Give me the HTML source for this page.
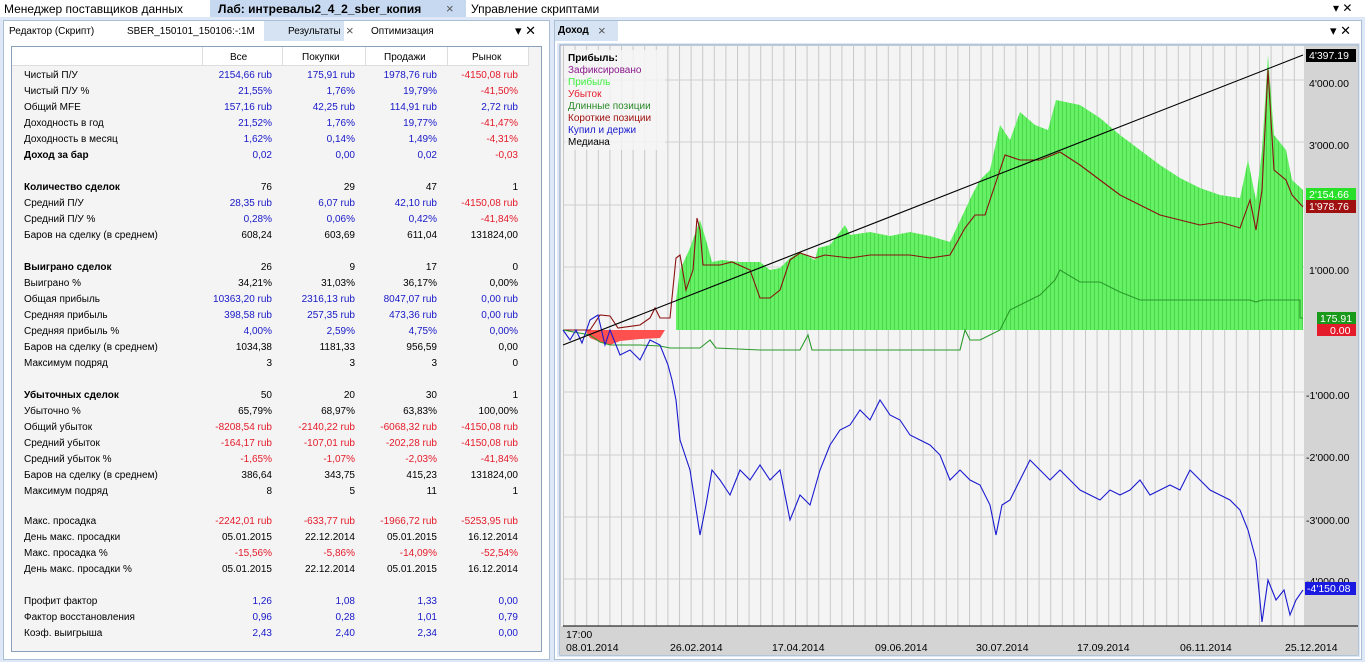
<!DOCTYPE html><html><head><meta charset="utf-8"><style>
*{margin:0;padding:0;box-sizing:border-box}
body{width:1365px;height:662px;background:#dfe8f6;font-family:"Liberation Sans",sans-serif;font-size:10px;color:#000;position:relative;overflow:hidden}
.a{position:absolute;white-space:nowrap}
.row{position:absolute;left:0;width:540px;height:16px;line-height:16px}
.row span{position:absolute}
.l{left:24px}.c1{right:268px}.c2{right:185px}.c3{right:103px}.c4{right:22px}
.b{color:#1818c8}.r{color:#e41b2a}.bold{font-weight:bold}
</style></head><body>
<div class="a" style="left:0;top:0;width:1365px;height:17px;background:#fff"></div>
<div class="a" style="left:4px;top:2px;font-size:12px">Менеджер поставщиков данных</div>
<div class="a" style="left:210px;top:0;width:256px;height:17px;background:#c7d9f0"></div>
<div class="a" style="left:218px;top:2px;font-size:12px;font-weight:bold">Лаб: интревалы2_4_2_sber_копия</div>
<div class="a" style="left:446px;top:1px;font-size:13px;color:#555">×</div>
<div class="a" style="left:471px;top:2px;font-size:12px">Управление скриптами</div>
<div class="a" style="left:1333px;top:1px;font-size:12px">▾ ✕</div>

<div class="a" style="left:3px;top:20px;width:547px;height:640px;background:#fff;border:1px solid #a9bfd6"></div>
<div class="a" style="left:9px;top:26px">Редактор (Скрипт)</div>
<div class="a" style="left:127px;top:26px">SBER_150101_150106:-:1M</div>
<div class="a" style="left:264px;top:21px;width:80px;height:20px;background:#d6e3f3"></div>
<div class="a" style="left:288px;top:26px">Результаты</div>
<div class="a" style="left:346px;top:23px;font-size:13px;color:#555">×</div>
<div class="a" style="left:371px;top:26px">Оптимизация</div>
<div class="a" style="left:515px;top:23px;font-size:13px">▾ ✕</div>
<div class="a" style="left:11px;top:46px;width:531px;height:606px;background:#f4f4f4;border:1px solid #8aa0b8"></div>
<div class="a" style="left:12px;top:47px;width:517px;height:19px;background:#fff;border-bottom:1px solid #ddd"></div>
<div class="a" style="left:202px;top:47px;width:1px;height:19px;background:#ddd"></div>
<div class="a" style="left:282px;top:47px;width:1px;height:19px;background:#ddd"></div>
<div class="a" style="left:365px;top:47px;width:1px;height:19px;background:#ddd"></div>
<div class="a" style="left:447px;top:47px;width:1px;height:19px;background:#ddd"></div>
<div class="a" style="left:528px;top:47px;width:1px;height:19px;background:#ddd"></div>
<div class="a" style="left:230px;top:52px">Все</div>
<div class="a" style="left:302px;top:52px">Покупки</div>
<div class="a" style="left:384px;top:52px">Продажи</div>
<div class="a" style="left:472px;top:52px">Рынок</div>
<div class="a" style="left:0;top:0">
<div class="row" style="top:68px"><span class="l">Чистый П/У</span><span class="c1 b">2154,66 rub</span><span class="c2 b">175,91 rub</span><span class="c3 b">1978,76 rub</span><span class="c4 r">-4150,08 rub</span></div>
<div class="row" style="top:84px"><span class="l">Чистый П/У %</span><span class="c1 b">21,55%</span><span class="c2 b">1,76%</span><span class="c3 b">19,79%</span><span class="c4 r">-41,50%</span></div>
<div class="row" style="top:100px"><span class="l">Общий MFE</span><span class="c1 b">157,16 rub</span><span class="c2 b">42,25 rub</span><span class="c3 b">114,91 rub</span><span class="c4 b">2,72 rub</span></div>
<div class="row" style="top:116px"><span class="l">Доходность в год</span><span class="c1 b">21,52%</span><span class="c2 b">1,76%</span><span class="c3 b">19,77%</span><span class="c4 r">-41,47%</span></div>
<div class="row" style="top:132px"><span class="l">Доходность в месяц</span><span class="c1 b">1,62%</span><span class="c2 b">0,14%</span><span class="c3 b">1,49%</span><span class="c4 r">-4,31%</span></div>
<div class="row" style="top:148px"><span class="l bold">Доход за бар</span><span class="c1 b">0,02</span><span class="c2 b">0,00</span><span class="c3 b">0,02</span><span class="c4 r">-0,03</span></div>
<div class="row" style="top:180px"><span class="l bold">Количество сделок</span><span class="c1">76</span><span class="c2">29</span><span class="c3">47</span><span class="c4">1</span></div>
<div class="row" style="top:196px"><span class="l">Средний П/У</span><span class="c1 b">28,35 rub</span><span class="c2 b">6,07 rub</span><span class="c3 b">42,10 rub</span><span class="c4 r">-4150,08 rub</span></div>
<div class="row" style="top:212px"><span class="l">Средний П/У %</span><span class="c1 b">0,28%</span><span class="c2 b">0,06%</span><span class="c3 b">0,42%</span><span class="c4 r">-41,84%</span></div>
<div class="row" style="top:228px"><span class="l">Баров на сделку (в среднем)</span><span class="c1">608,24</span><span class="c2">603,69</span><span class="c3">611,04</span><span class="c4">131824,00</span></div>
<div class="row" style="top:260px"><span class="l bold">Выиграно сделок</span><span class="c1">26</span><span class="c2">9</span><span class="c3">17</span><span class="c4">0</span></div>
<div class="row" style="top:276px"><span class="l">Выиграно %</span><span class="c1">34,21%</span><span class="c2">31,03%</span><span class="c3">36,17%</span><span class="c4">0,00%</span></div>
<div class="row" style="top:292px"><span class="l">Общая прибыль</span><span class="c1 b">10363,20 rub</span><span class="c2 b">2316,13 rub</span><span class="c3 b">8047,07 rub</span><span class="c4 b">0,00 rub</span></div>
<div class="row" style="top:308px"><span class="l">Средняя прибыль</span><span class="c1 b">398,58 rub</span><span class="c2 b">257,35 rub</span><span class="c3 b">473,36 rub</span><span class="c4 b">0,00 rub</span></div>
<div class="row" style="top:324px"><span class="l">Средняя прибыль %</span><span class="c1 b">4,00%</span><span class="c2 b">2,59%</span><span class="c3 b">4,75%</span><span class="c4 b">0,00%</span></div>
<div class="row" style="top:340px"><span class="l">Баров на сделку (в среднем)</span><span class="c1">1034,38</span><span class="c2">1181,33</span><span class="c3">956,59</span><span class="c4">0,00</span></div>
<div class="row" style="top:356px"><span class="l">Максимум подряд</span><span class="c1">3</span><span class="c2">3</span><span class="c3">3</span><span class="c4">0</span></div>
<div class="row" style="top:388px"><span class="l bold">Убыточных сделок</span><span class="c1">50</span><span class="c2">20</span><span class="c3">30</span><span class="c4">1</span></div>
<div class="row" style="top:404px"><span class="l">Убыточно %</span><span class="c1">65,79%</span><span class="c2">68,97%</span><span class="c3">63,83%</span><span class="c4">100,00%</span></div>
<div class="row" style="top:420px"><span class="l">Общий убыток</span><span class="c1 r">-8208,54 rub</span><span class="c2 r">-2140,22 rub</span><span class="c3 r">-6068,32 rub</span><span class="c4 r">-4150,08 rub</span></div>
<div class="row" style="top:436px"><span class="l">Средний убыток</span><span class="c1 r">-164,17 rub</span><span class="c2 r">-107,01 rub</span><span class="c3 r">-202,28 rub</span><span class="c4 r">-4150,08 rub</span></div>
<div class="row" style="top:452px"><span class="l">Средний убыток %</span><span class="c1 r">-1,65%</span><span class="c2 r">-1,07%</span><span class="c3 r">-2,03%</span><span class="c4 r">-41,84%</span></div>
<div class="row" style="top:468px"><span class="l">Баров на сделку (в среднем)</span><span class="c1">386,64</span><span class="c2">343,75</span><span class="c3">415,23</span><span class="c4">131824,00</span></div>
<div class="row" style="top:484px"><span class="l">Максимум подряд</span><span class="c1">8</span><span class="c2">5</span><span class="c3">11</span><span class="c4">1</span></div>
<div class="row" style="top:514px"><span class="l">Макс. просадка</span><span class="c1 r">-2242,01 rub</span><span class="c2 r">-633,77 rub</span><span class="c3 r">-1966,72 rub</span><span class="c4 r">-5253,95 rub</span></div>
<div class="row" style="top:530px"><span class="l">День макс. просадки</span><span class="c1">05.01.2015</span><span class="c2">22.12.2014</span><span class="c3">05.01.2015</span><span class="c4">16.12.2014</span></div>
<div class="row" style="top:546px"><span class="l">Макс. просадка %</span><span class="c1 r">-15,56%</span><span class="c2 r">-5,86%</span><span class="c3 r">-14,09%</span><span class="c4 r">-52,54%</span></div>
<div class="row" style="top:562px"><span class="l">День макс. просадки %</span><span class="c1">05.01.2015</span><span class="c2">22.12.2014</span><span class="c3">05.01.2015</span><span class="c4">16.12.2014</span></div>
<div class="row" style="top:594px"><span class="l">Профит фактор</span><span class="c1 b">1,26</span><span class="c2 b">1,08</span><span class="c3 b">1,33</span><span class="c4 b">0,00</span></div>
<div class="row" style="top:610px"><span class="l">Фактор восстановления</span><span class="c1 b">0,96</span><span class="c2 b">0,28</span><span class="c3 b">1,01</span><span class="c4 b">0,79</span></div>
<div class="row" style="top:626px"><span class="l">Коэф. выигрыша</span><span class="c1 b">2,43</span><span class="c2 b">2,40</span><span class="c3 b">2,34</span><span class="c4 b">0,00</span></div>
</div>

<div class="a" style="left:554px;top:20px;width:808px;height:640px;background:#fff;border:1px solid #a9bfd6"></div>
<div class="a" style="left:555px;top:21px;width:63px;height:20px;background:#d6e3f3"></div>
<div class="a" style="left:558px;top:25px;font-weight:bold">Доход</div>
<div class="a" style="left:598px;top:23px;font-size:13px;color:#555">×</div>
<div class="a" style="left:1330px;top:23px;font-size:13px">▾ ✕</div>
<svg class="a" style="left:557px;top:43px" width="803" height="614" viewBox="557 43 803 614">
<defs><pattern id="vg" x="563" y="0" width="11.6" height="700" patternUnits="userSpaceOnUse"><rect width="11.6" height="700" fill="#f4f4f4"/><rect x="0" width="1" height="700" fill="#c8c8c8"/></pattern>
<pattern id="gb" x="563" y="0" width="4" height="700" patternUnits="userSpaceOnUse"><rect width="4" height="700" fill="#66f066"/><rect x="3" width="1" height="700" fill="#48d848"/></pattern></defs>
<rect x="557" y="43" width="803" height="614" fill="#dfe8f6"/>
<rect x="560" y="45" width="798" height="610" fill="#f4f4f4" stroke="#8aa0b8"/>
<rect x="563" y="46" width="741" height="580" fill="url(#vg)"/>
<g stroke="#d0d0d0"><line x1="563" x2="1304" y1="80" y2="80"/><line x1="563" x2="1304" y1="142" y2="142"/><line x1="563" x2="1304" y1="205" y2="205"/><line x1="563" x2="1304" y1="267" y2="267"/><line x1="563" x2="1304" y1="392" y2="392"/><line x1="563" x2="1304" y1="455" y2="455"/><line x1="563" x2="1304" y1="517" y2="517"/><line x1="563" x2="1304" y1="579" y2="579"/></g>
<rect x="1304" y="46" width="54" height="580" fill="#d4d4d4"/>
<rect x="560" y="626" width="798" height="29" fill="#d4d4d4"/>
<line x1="563" x2="1358" y1="626" y2="626" stroke="#000"/>
<polygon points="585,330 590,338 600,342 610,345 620,341 640,339 660,338 665,330" fill="#ff5050"/>
<polygon points="676,330 676,300 680,270 690,248 700,220 706,240 712,262 722,260 740,262 760,262 770,270 780,268 790,258 800,252 815,260 818,248 830,245 845,225 850,235 870,232 890,236 910,232 930,236 950,242 965,210 972,195 980,180 990,170 1000,125 1010,140 1020,112 1035,125 1048,130 1056,100 1080,105 1100,118 1120,135 1140,150 1160,165 1180,178 1200,188 1220,195 1240,198 1248,160 1256,200 1262,150 1268,55 1274,135 1286,150 1292,180 1303,190 1303,330" fill="url(#gb)"/>
<polyline fill="none" stroke="#8b1010" stroke-width="1.1" points="563,330 590,330 600,315 610,316 618,328 640,325 650,318 655,308 660,318 670,318 676,258 680,255 686,290 693,270 697,218 700,230 703,265 720,265 732,262 750,270 760,298 770,298 780,290 790,260 800,253 815,258 825,255 850,258 870,255 890,255 910,255 930,258 950,255 965,228 975,215 985,215 995,185 1005,155 1020,160 1040,160 1060,152 1080,165 1100,180 1120,195 1140,205 1160,215 1180,220 1200,225 1220,222 1240,228 1250,200 1256,230 1262,190 1268,70 1274,170 1286,180 1292,195 1303,207"/>
<polyline fill="none" stroke="#2a9a2a" stroke-width="1.1" points="563,330 590,335 600,342 610,345 620,345 640,345 660,346 670,348 700,348 710,340 716,348 760,350 800,350 808,335 812,350 900,350 960,350 965,330 970,340 980,340 1000,330 1010,310 1030,300 1040,295 1055,280 1060,270 1080,282 1100,282 1120,292 1140,300 1160,300 1180,300 1200,300 1220,300 1240,300 1250,300 1256,302 1262,300 1300,300 1300,318 1303,318"/>
<polyline fill="none" stroke="#1a1ad0" stroke-width="1.1" points="563,330 570,340 576,330 582,343 590,320 598,315 605,345 610,330 620,355 630,350 640,360 650,340 660,345 668,365 672,380 676,400 680,440 690,470 700,535 706,505 712,470 720,480 730,495 740,470 750,480 760,465 770,480 780,470 790,520 800,495 810,505 820,470 830,445 840,430 850,425 860,410 870,420 880,400 890,415 900,420 910,435 920,440 930,445 940,455 950,480 960,470 970,480 980,485 990,505 996,535 1002,505 1010,500 1020,480 1030,460 1040,470 1050,480 1060,470 1070,480 1080,490 1090,495 1100,500 1110,490 1120,495 1130,490 1140,480 1150,495 1160,490 1170,485 1180,490 1190,470 1200,480 1210,490 1220,495 1230,500 1240,510 1248,530 1256,560 1262,622 1268,580 1276,600 1284,590 1290,615 1296,600 1303,590"/>
<line x1="563" y1="345" x2="1303" y2="55" stroke="#000" stroke-width="1.1"/>
<g font-family="Liberation Sans,sans-serif" font-size="10">
<rect x="565" y="50" width="100" height="100" fill="#f4f4f4" opacity="0.85"/>
<text x="568" y="61" font-weight="bold">Прибыль:</text>
<text x="568" y="73" fill="#8b1a8b">Зафиксировано</text>
<text x="568" y="85" fill="#3ef03e">Прибыль</text>
<text x="568" y="97" fill="#e41b2a">Убыток</text>
<text x="568" y="109" fill="#2a8a2a">Длинные позиции</text>
<text x="568" y="121" fill="#a01010">Короткие позиции</text>
<text x="568" y="133" fill="#1a1ad0">Купил и держи</text>
<text x="568" y="145">Медиана</text>
<g font-size="10.5">
<rect x="1306" y="49" width="50" height="13" fill="#000"/><text x="1309" y="59" fill="#fff">4'397.19</text>
<text x="1309" y="87">4'000.00</text>
<text x="1309" y="149">3'000.00</text>
<text x="1309" y="274">1'000.00</text>
<rect x="1306" y="188" width="50" height="13" fill="#28e028"/><text x="1309" y="198" fill="#fff">2'154.66</text>
<rect x="1306" y="200" width="50" height="13" fill="#a01010"/><text x="1309" y="210" fill="#fff">1'978.76</text>
<rect x="1317" y="312" width="39" height="12" fill="#1a9a1a"/><text x="1320" y="322" fill="#fff">175.91</text>
<rect x="1317" y="324" width="39" height="12" fill="#e41b2a"/><text x="1330" y="334" fill="#fff">0.00</text>
<text x="1306" y="399">-1'000.00</text>
<text x="1306" y="461">-2'000.00</text>
<text x="1306" y="524">-3'000.00</text>
<text x="1306" y="585">-4'000.00</text>
<rect x="1305" y="582" width="51" height="13" fill="#1a1ae0"/><text x="1307" y="592" fill="#fff">-4'150.08</text>
<text x="566" y="638">17:00</text>
<text x="566" y="651">08.01.2014</text>
<text x="670" y="651">26.02.2014</text>
<text x="772" y="651">17.04.2014</text>
<text x="875" y="651">09.06.2014</text>
<text x="976" y="651">30.07.2014</text>
<text x="1077" y="651">17.09.2014</text>
<text x="1180" y="651">06.11.2014</text>
<text x="1285" y="651">25.12.2014</text>
</g></g>
</svg>
</body></html>
